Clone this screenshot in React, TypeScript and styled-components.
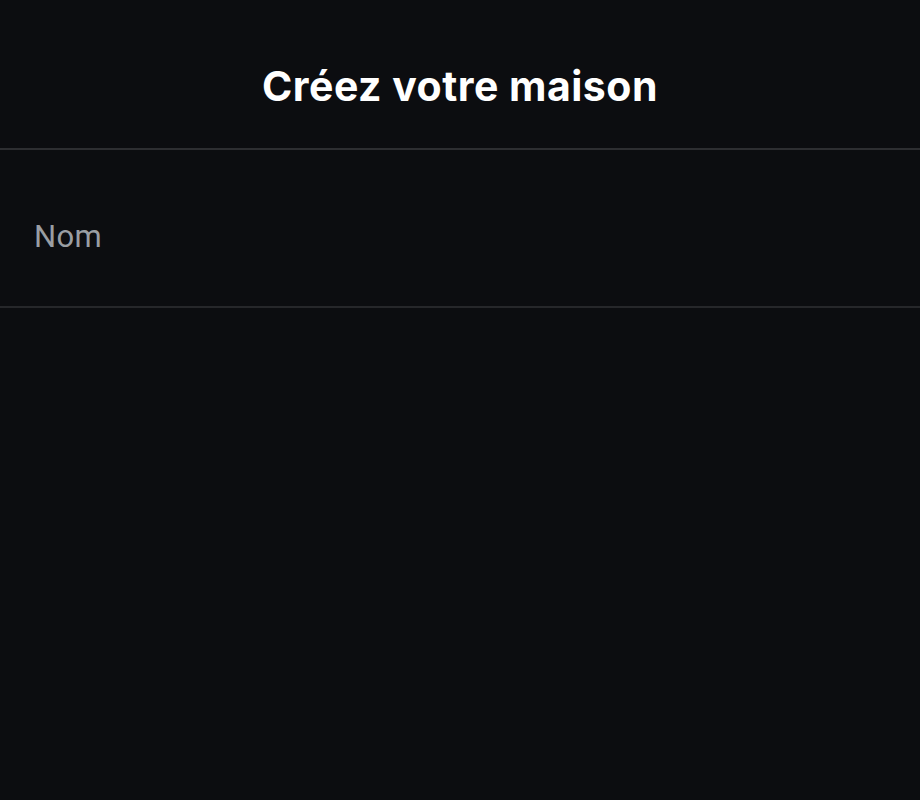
import React from "react";
import styled, { createGlobalStyle } from "styled-components";

const GlobalStyle = createGlobalStyle`
  html, body {
    margin: 0;
    padding: 0;
    background: #0c0d10;
  }
  #root {
    min-height: 800px;
  }
`;

const App: React.FC = () => {
  return (
    <>
      <GlobalStyle />
      <Screen>
        <Header>
          <Title>Créez votre maison</Title>
        </Header>
        <Field>
          <NameInput placeholder="Nom" />
        </Field>
      </Screen>
    </>
  );
};

export default App;

const Screen = styled.div`
  width: 920px;
  min-height: 800px;
  background: #0c0d10;
  display: flex;
  flex-direction: column;
`;

const Header = styled.header`
  height: 148px;
  display: flex;
  align-items: center;
  justify-content: center;
  border-bottom: 2px solid #2d2e31;
  box-sizing: content-box;
`;

const Title = styled.h1`
  margin: 0;
  margin-top: 24px;
  font-family: "Inter", "Lato", sans-serif;
  font-weight: 700;
  font-size: 41px;
  color: #ffffff;
  letter-spacing: 0.5px;
`;

const Field = styled.div`
  height: 156px;
  display: flex;
  align-items: center;
  padding: 0 34px;
  border-bottom: 2px solid #26272a;
`;

const NameInput = styled.input`
  flex: 1;
  background: transparent;
  border: none;
  outline: none;
  font-family: "Roboto", "Noto Sans", sans-serif;
  font-size: 31px;
  letter-spacing: 0.3px;
  color: #ffffff;
  padding: 0;
  margin-top: 16px;

  &::placeholder {
    color: #9a9ea3;
  }
`;
